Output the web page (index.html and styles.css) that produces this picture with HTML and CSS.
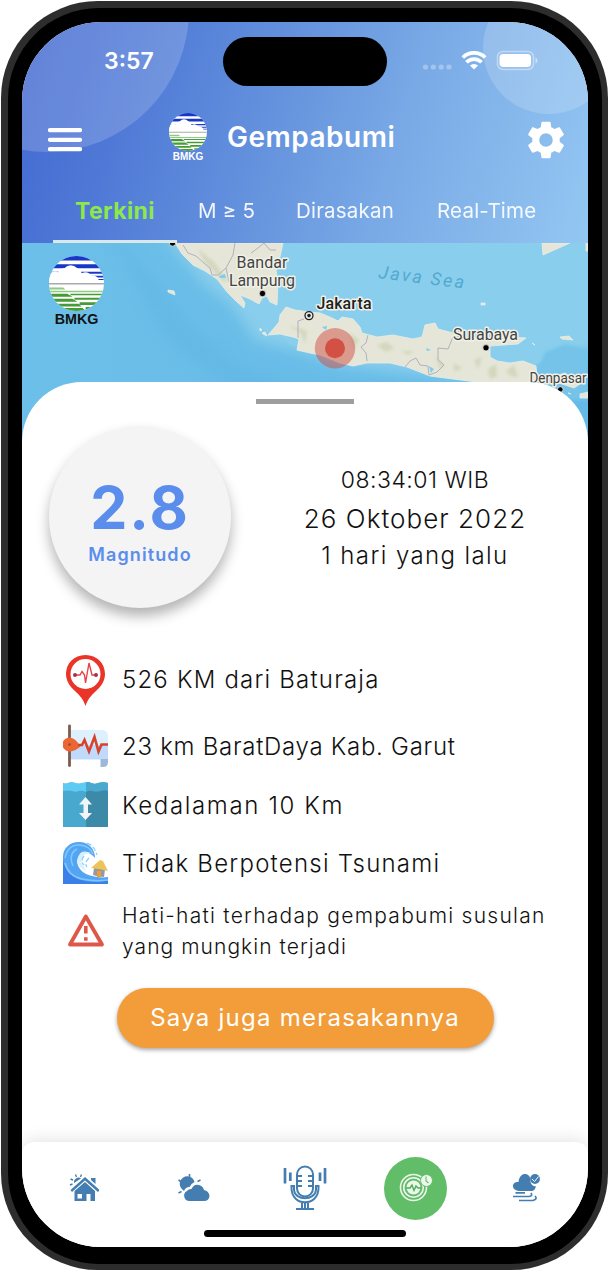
FILE: index.html
```html
<!DOCTYPE html>
<html lang="id">
<head>
<meta charset="utf-8">
<title>Gempabumi</title>
<link rel="stylesheet" href="styles.css">
</head>
<body>
<svg width="0" height="0" class="defs">
  <defs>
    <clipPath id="disc"><circle cx="27" cy="27" r="27"/></clipPath>
    <symbol id="logo" viewBox="0 0 54 54">
      <g clip-path="url(#disc)">
        <rect width="54" height="54" fill="#fff"/>
        <path d="M0 0H54V4.500H0ZM0 8H54V12H0ZM0 15.500H54V17.500H0ZM34 19.500H54V21H34ZM44 22.500H54V23.500H44Z" fill="#1737c6"/>
        <path d="M0 27V18Q3 14 9 16Q11 12 15 12Q21 6 28 12Q32 14 32 17Q38 14 41 19Q48 19 49 24H54V27Z" fill="#fff"/>
        <path d="M0 26.500H54V28H0Z" fill="#aaa"/>
        <path d="M0 31H14L16 33H0Z" fill="#8fca83"/>
        <path d="M0 34H54V35.500H0Z" fill="#8fca83"/>
        <path d="M0 37H18L23 40H0ZM21 37H54V38.500H21ZM0 42H23L28 45H0ZM25 41H54V43H25ZM0 47H29L32 49.500H0ZM30 45.500H54V48H30ZM0 51H33L36 54H0ZM36 50H54V54H36Z" fill="#459b35"/>
      </g>
    </symbol>
  </defs>
</svg>
<div class="phone">
 <div class="bezel">
  <div class="screen">
    <header class="header">
      <div class="bubble bubble-left"></div>
      <div class="bubble bubble-right"></div>
      <div class="status">
        <span class="time">3:57</span>
        <span class="island"></span>
        <svg class="signals" width="120" height="24" viewBox="420 48 120 24">
          <g fill="#fff" opacity=".3"><circle cx="426.500" cy="67" r="2.600"/><circle cx="434.300" cy="67" r="2.600"/><circle cx="442.200" cy="67" r="2.600"/><circle cx="450" cy="67" r="2.600"/></g>
          <g fill="none" stroke="#fff" stroke-width="3.700"><path d="M463.800 57.500A16 16 0 0 1 486.200 57.500"/><path d="M467.400 62.300A10.500 10.500 0 0 1 482.600 62.300"/></g>
          <path d="M470.900 65.500A6.200 6.200 0 0 1 479.100 65.500L475 69.500Z" fill="#fff"/>
          <rect x="498.500" y="51.500" width="36" height="18" rx="5.500" fill="none" stroke="#fff" stroke-opacity=".4" stroke-width="1.500"/>
          <rect x="500.500" y="54" width="31.500" height="13" rx="3.800" fill="#fff"/>
          <path d="M536.500 57.500Q538.500 58.500 538.500 60.500T536.500 63.500Z" fill="#fff" opacity=".5"/>
        </svg>
      </div>
      <div class="titlebar">
        <svg class="menu" width="34" height="24" viewBox="0 0 34 24"><path d="M2 2.200H32M2 11.800H32M2 21.200H32" stroke="#fff" stroke-width="4.300" stroke-linecap="round"/></svg>
        <div class="brand"><svg width="38" height="38"><use href="#logo"/></svg><span>BMKG</span></div>
        <h1>Gempabumi</h1>
        <svg class="gear" width="44" height="44" viewBox="0 0 24 24"><path fill="#fff" d="M19.430 12.980c.04-.32.07-.64.07-.98s-.03-.66-.07-.98l2.110-1.650c.19-.15.24-.42.12-.64l-2-3.460c-.12-.22-.39-.3-.61-.22l-2.490 1c-.52-.4-1.080-.73-1.690-.98l-.38-2.650C14.460 2.180 14.250 2 14 2h-4c-.25 0-.46.18-.49.42l-.38 2.650c-.61.25-1.170.59-1.690.98l-2.490-1c-.23-.09-.49 0-.61.22l-2 3.460c-.13.22-.07.49.12.64l2.110 1.650c-.04.32-.07.65-.07.98s.03.66.07.98l-2.110 1.650c-.19.15-.24.42-.12.64l2 3.460c.12.22.39.3.61.22l2.490-1c.52.4 1.080.73 1.690.98l.38 2.650c.03.24.24.42.49.42h4c.25 0 .46-.18.49-.42l.38-2.650c.61-.25 1.170-.59 1.690-.98l2.490 1c.23.09.49 0 .61-.22l2-3.460c.12-.22.07-.49-.12-.64l-2.110-1.650zM12 15.700a3.700 3.700 0 1 1 0-7.400 3.700 3.700 0 0 1 0 7.400z"/></svg>
      </div>
      <nav class="tabs">
        <span class="tab active">Terkini</span>
        <span class="tab">M ≥ 5</span>
        <span class="tab">Dirasakan</span>
        <span class="tab">Real-Time</span>
      </nav>
    </header>

    <section class="map">
      <svg width="566" height="200" viewBox="22 243 566 200">
        <defs>
          <filter id="soft" x="-20%" y="-20%" width="140%" height="140%"><feGaussianBlur stdDeviation="7"/></filter>
          <filter id="hill" x="-50%" y="-50%" width="200%" height="200%"><feGaussianBlur stdDeviation="1.800"/></filter>
          <linearGradient id="sea" x1="0" y1="0" x2="1" y2="0"><stop offset="0" stop-color="#6bbfe8"/><stop offset="1" stop-color="#66bae7"/></linearGradient>
        </defs>
        <rect x="22" y="243" width="566" height="200" fill="url(#sea)"/>
        <path d="M110 235L150 275L190 325L235 365L310 388L460 400H320L230 390L165 335Z" fill="#5eb3e2" opacity=".45" filter="url(#soft)"/>
        <path d="M165 238L205 285L232 305L255 340L300 352L345 366L430 376L520 388L538 365L600 350V230Z" fill="#89ceec" filter="url(#soft)"/>
        <path d="M260 243H588V340L550 356L520 375L400 365L290 345L268 320Z" fill="#89ceec"/>
        <path d="M537 375L545 352L566 344L588 350V400H560Z" fill="#74c3e9" filter="url(#hill)"/>
        <g fill="#e5e6d7" stroke="#e9eee6" stroke-width=".8">
          <path d="M175 243L182 254L193 265L205 271L217 279L227 292L237 302L244 308L245 303L240 295L250 299L259 304L262 298L267 296L270 302L277 305L278 283L276 270L280 257L283 243Z"/>
          <path d="M286 307L295 310L310 312L320 313L332 318L338 321L342 317L353 319L360 327L362 333L377 337L393 335L413 339L422 337L425 325L435 323L438 329L453 333L457 338L483 338L510 337L526 338L518 344L490 346L490 357L497 361L510 363L523 361L536 366L537 377L533 384H485L477 382L453 379L430 376L407 367L390 363L367 363L353 366L340 363L320 355L310 353L297 350L299 339L293 337L280 334L268 335L275 327L279 322L280 315Z"/>
          <path d="M542 243H570L543 255ZM586 243H588V251H586ZM168 290L174 291L175 295L168 292ZM481 303H485V305H481ZM560 337L569 336L573 340L562 339ZM532 343L535 345ZM552 377L565 373L580 384L574 388L556 382ZM568 393L571 394ZM580 394L588 392V398H580Z"/>
          <path d="M260 328L262 330L260 331ZM262 333L265 332L267 336L263 334Z"/>
        </g>
        <g fill="#cbd1b4" opacity=".7" filter="url(#hill)">
          <path d="M198 249L214 262L228 282L223 281L204 261ZM234 277L246 290L241 288ZM288 325L307 331L305 345L301 333ZM377 345L386 352L394 348L387 342ZM401 351H414L408 355ZM435 356L444 365L440 369ZM453 363L462 368L455 372ZM474 360L482 357L478 369ZM488 369L496 364L497 376L490 379ZM506 371L514 365L518 377L511 376ZM350 333L359 340L354 349Z"/>
        </g>
        <g fill="none" stroke="#b4b0bd" stroke-width="1"><path d="M183 245L188 253L196 256L204 263L210 268L212 275H218L226 268M235 243L233 255L226 268L229 282M251 253L258 248L264 243L270 250L276 250M368 335L366 343L361 347L366 353L367 361M405 367L410 361L416 358L420 365L428 366L429 375L437 372L444 365L438 360L438 348L448 349L453 337M304 319L298 321L298 338"/></g>
        <g fill="#7fcdf0"><path d="M219 276L225 274L226 278H220ZM426 348L431 350L427 351ZM429 366L434 369L431 373ZM322 327L327 326L326 330Z"/></g>
        <g class="place">
          <text x="236.500" y="267.500" textLength="51">Bandar</text>
          <text x="229" y="286" textLength="66">Lampung</text>
          <text x="453" y="340" textLength="65">Surabaya</text>
          <text x="529.500" y="383" textLength="57" lengthAdjust="spacingAndGlyphs" class="small">Denpasar</text>
          <text x="316.500" y="309" textLength="55" class="capital">Jakarta</text>
        </g>
        <g stroke="#f3f3ea" stroke-width=".8"><circle cx="262.500" cy="293.500" r="3.200"/><circle cx="172.500" cy="243" r="3.200"/><circle cx="486" cy="347.800" r="3.200"/><circle cx="560.300" cy="389.500" r="2.800"/></g>
        <circle cx="309" cy="315.600" r="4" fill="#eee" stroke="#222" stroke-width="1.300"/><circle cx="309" cy="315.600" r="1.800" fill="#222"/>
        <text class="sea" transform="translate(378 278) rotate(7)" textLength="86">Java Sea</text>
        <circle cx="335" cy="348.300" r="20.200" fill="#cf4d44" opacity=".5"/>
        <circle cx="335" cy="348.300" r="10" fill="#d25044"/>
      </svg>
      <div class="map-logo"><svg width="55" height="55"><use href="#logo"/></svg><span>BMKG</span></div>
    </section>

    <main class="sheet">
      <div class="handle"></div>
      <section class="summary">
        <div class="magnitude"><strong>2.8</strong><span>Magnitudo</span></div>
        <div class="when">
          <div class="clock">08:34:01 WIB</div>
          <div class="date">26 Oktober 2022</div>
          <div class="ago">1 hari yang lalu</div>
        </div>
      </section>
      <ul class="facts">
        <li>
          <svg width="46" height="52" viewBox="63 653 46 52"><path d="M85.500 654C74 654 66 662.500 66 673C66 680 70 685.500 75 690C80 694.500 83 698 85.500 705C88 698 91 694.500 96 690C101 685.500 105 680 105 673C105 662.500 97 654 85.500 654Z" fill="#e93427"/><circle cx="85.500" cy="673" r="15" fill="#fff"/><path d="M75 674H80L82 670.500L84.500 674L85.500 682L89 662L92 674H96" fill="none" stroke="#e74345" stroke-width="1.400"/><path d="M73 674A2 2 0 1 1 77 674A2 2 0 1 1 73 674M94 674A2 2 0 1 1 98 674A2 2 0 1 1 94 674" fill="#a92f52"/></svg>
          <span class="distance">526 KM dari Baturaja</span>
        </li>
        <li>
          <svg width="46" height="44" viewBox="63 724 46 44"><path d="M70 730H102Q108 730 108 737V760H70Z" fill="#def0fd"/><path d="M70 745H108V759H70Z" fill="#c1d9fa"/><path d="M100.500 759H108V762Q108 767 103 767H100.500Z" fill="#9fb8d9"/><path d="M69.500 726V765.500" stroke="#7b5b4b" stroke-width="2.800" stroke-linecap="round"/><path d="M70 737.500Q75 738 79 744.500L82 745Q75 752 69 751.500A6.500 6.500 0 1 1 70 737.500Z" fill="#ec6634"/><path d="M78 745H82L84.500 740L89 751.500L94.500 737L98.500 751.500L101.500 744.500H108" fill="none" stroke="#d5432b" stroke-width="2.600"/><circle cx="69.500" cy="744.500" r="1.200" fill="#8a4936"/></svg>
          <span class="region">23 km BaratDaya Kab. Garut</span>
        </li>
        <li>
          <svg width="46" height="46" viewBox="63 782 46 46"><path d="M63 783Q66 784 68 783Q72 781.500 75 783Q79 784 82 783H86V827H63Z" fill="#49a8ce"/><path d="M86 782Q89 781.500 91 783Q95 784.500 98 783Q103 781.500 108 783V827H86Z" fill="#3c89a8"/><path d="M63 783Q66 785 69 783Q72 781.500 75 783Q79 785 82 783L86 782V792Q82 790 79 791Q76 792.500 72 791Q68 790 63 791Z" fill="#5dcbf3"/><path d="M86 782Q89 781.500 91 783Q95 785 98 783Q103 781.500 108 783V791Q104 789.500 101 791Q96 792.500 92 791Q89 790 86 792Z" fill="#4aa9ce"/><path d="M85.500 797L92 804.500H88V813H92L85.500 820L79 813H83.500V804.500H79Z" fill="#f2f5f6"/></svg>
          <span class="depth">Kedalaman 10 Km</span>
        </li>
        <li>
          <svg width="46" height="46" viewBox="63 840 46 46"><path d="M63 884V857C63 848 70 842 79 842C89 842 95 849 95 858C91 853 86 851 81 854C74 859 77 869 86 874C93 877 102 878 108 877V884Z" fill="#53a5f4"/><path d="M63 884V860Q66 875 81 880Q94 884 108 880V884Z" fill="#3b7fe9"/><path d="M65 858Q68 844 80 845Q90 846 93 854M65 863Q68 876 82 879Q96 882 108 880M77 849Q68 854 73 866" fill="none" stroke="#80c8fc" stroke-width="1.500"/><path d="M91 853Q79 848 78 859Q77 867 86 871L84 867Q80 863 82 858Q84 853 91 853Z" fill="#d5f1ff"/><path d="M87 843Q94 845 97 855M84 856Q80 861 84 865M89 858Q84 863 87 867" fill="none" stroke="#8bcfff" stroke-width="1.300" stroke-dasharray="5 2"/><path d="M94 868L105 869L104 877Q98 877 93 875Z" fill="#9599a6"/><path d="M97 871H101V877H97Z" fill="#f49b2c"/><path d="M91 868L100 860L103 861L108 871L99 869Z" fill="#edc35a"/></svg>
          <span class="tsunami">Tidak Berpotensi Tsunami</span>
        </li>
        <li>
          <svg width="46" height="40" viewBox="63 911 46 40"><path d="M85.800 916.500L102 944.500H70Z" fill="none" stroke="#df5748" stroke-width="3.800" stroke-linejoin="round"/><path d="M85.800 926V933.500M85.800 937.200V940.700" stroke="#df5748" stroke-width="3.600"/></svg>
          <span class="note">Hati-hati terhadap gempabumi susulan<br><span class="note-end">yang mungkin terjadi</span></span>
        </li>
      </ul>
      <button class="felt">Saya juga merasakannya</button>
    </main>

    <nav class="bottom">
      <div class="items">
        <svg width="30" height="30" viewBox="68 1174 30 30" fill="#447eb0"><path d="M69.500 1191L84 1178L98.500 1191L97 1193L84 1181.500L71 1193Z"/><path d="M73.500 1192L84 1183L94 1192V1202H73.500ZM90 1179H94.500V1185L90 1181Z"/><path d="M76.500 1195H81V1199.500H76.500ZM85.500 1195H89.500V1202H85.500Z" fill="#fff"/><path d="M73 1184A4.500 4.500 0 0 1 80 1179.500Z"/><path d="M69.500 1180L72 1181M74.500 1175.500L75.500 1178M80.500 1175.500L79.500 1178M69 1186L71.500 1185" stroke="#447eb0" stroke-width="1.400"/></svg>
        <svg width="34" height="30" viewBox="178 1174 34 30" fill="#447eb0"><path d="M190.500 1202A5.300 5.300 0 0 1 188 1192Q189 1190 192.500 1190Q195 1184.500 200 1186Q204 1187 205 1191Q210 1192 210.500 1197Q210 1202 205 1202Z"/><path d="M184 1191A7.500 7.500 0 1 1 195.500 1183Q191.500 1185 190.500 1188Q186.500 1188 185 1192Z"/><path d="M190.500 1175V1178.500M179.500 1181L182.500 1183M179.500 1194L182.500 1192.500M198.500 1182.500L201.500 1181" stroke="#447eb0" stroke-width="1.600"/></svg>
        <svg width="44" height="46" viewBox="283 1166 44 46" fill="none" stroke="#447eb0" stroke-width="2"><rect x="297" y="1167.500" width="16" height="30" rx="8"/><path d="M297 1177H302M297 1182H302M297 1187H302M308 1177H313M308 1182H313M308 1187H313M294 1187H291.500V1189C291.500 1208 318.500 1208 318.500 1189V1187H316V1191C315 1202 295 1202 294 1191ZM302 1203V1209M305 1203V1209M308 1203V1209M296 1210H314"/><path d="M285 1169V1184.500M290.300 1173.500V1182M320 1173.500V1182M325 1169V1184.500" stroke-width="2.700"/></svg>
        <span class="current"><svg width="34" height="30" viewBox="399 1174 34 30" fill="none" stroke="#edf8ec" stroke-width="1.600"><circle cx="413.500" cy="1188.500" r="13"/><circle cx="413.500" cy="1188.500" r="9.800"/><circle cx="413.500" cy="1188.500" r="7" fill="#edf8ec" stroke="none"/><path d="M406 1189H410L412 1186L414 1191.500L416 1187L418 1189H421" stroke="#4dae56" stroke-width="1.400"/><circle cx="426.500" cy="1181.500" r="6" fill="#edf8ec" stroke="#62bd68" stroke-width="1"/><path d="M426 1177.500V1182L428.500 1184" stroke="#62bd68" stroke-width="1.100"/></svg></span>
        <svg width="30" height="30" viewBox="511 1174 30 30" fill="#447eb0"><path d="M519 1192C510 1191 512 1182 518.500 1183C519.500 1173 529 1173 530.500 1180C529.500 1186 535 1188 536 1187Q535 1192 531.500 1192Z"/><circle cx="535" cy="1180" r="4.900"/><path d="M532 1180L534.500 1182.500L538.500 1177.500" fill="none" stroke="#fff" stroke-width="1"/><path d="M515.500 1193.900H525M513 1197.500H529Q533 1197 531 1194M519 1201.500H533Q538 1200 535 1197" fill="none" stroke="#447eb0" stroke-width="1.700"/></svg>
      </div>
      <div class="home-indicator"></div>
    </nav>
  </div>
 </div>
</div>
</body>
</html>
```
FILE: styles.css
```css
* { box-sizing: border-box; }
body { margin: 0; background: #fff; font-family: Inter, "Liberation Sans", sans-serif; overflow: hidden; }
.defs { position: absolute; }
.phone { width: 607px; height: 1269px; margin: 1px 0 0 1px; padding: 6.500px; background: #2d2d2d; border-radius: 97px; }
.bezel { height: 100%; padding: 14.500px; background: #000; border-radius: 91px; }
.screen { position: relative; display: flex; flex-direction: column; width: 566px; height: 1225px; background: #fff; border-radius: 79px; overflow: hidden; }

.header { position: relative; flex: none; height: 221px; overflow: hidden; color: #fff; background: linear-gradient(107deg, #4369d1 0%, #4e77d6 18%, #6492dd 44%, #7aaae6 66%, #93c7f2 100%); }
.bubble { position: absolute; border-radius: 50%; background: rgba(255,255,255,.17); }
.bubble-left { left: -117px; top: -154px; width: 284px; height: 284px; }
.bubble-right { left: 461px; top: -40px; width: 132px; height: 132px; }
.status { position: relative; display: flex; height: 78px; padding: 15px 49px 0 0; }
.time { width: 201px; padding-left: 82px; font-size: 23px; font-weight: 600; line-height: 49px; }
.island { width: 165px; height: 49px; border-radius: 25px; background: #000; }
.signals { margin: 11px 0 0 32px; flex: none; }
.titlebar { position: relative; display: flex; height: 80px; padding-left: 26px; align-items: flex-start; }
.menu { margin-top: 28px; }
.brand { width: 40px; margin: 13px 0 0 86px; display: flex; flex-direction: column; align-items: center; font: 700 10px/11px "Liberation Sans", sans-serif; }
h1 { width: 280px; margin: 17px 0 0 19px; font-size: 28px; line-height: 40px; font-weight: 600; letter-spacing: .5px; }
.gear { margin: 18px 0 0 17px; flex: none; }
.tabs { position: relative; display: flex; height: 63px; padding-left: 31px; font-size: 20.500px; line-height: 62px; letter-spacing: .2px; }
.tab { flex: none; opacity: .92; }
.tab.active { width: 124px; padding-left: 22px; margin-right: 21px; color: #8de84b; font-size: 23px; font-weight: 700; letter-spacing: .4px; border-bottom: 3px solid #dbe8e9; opacity: 1; }
.tab:nth-child(2) { width: 98px; }
.tab:nth-child(3) { width: 141px; }

.map { position: relative; flex: none; height: 139px; }
.map > svg { display: block; }
.place text { font: 16px Roboto, sans-serif; fill: #444; paint-order: stroke; stroke: #f0f1e8; stroke-width: 3px; stroke-linejoin: round; }
.place .small { font-size: 14.500px; }
.place .capital { font-weight: 500; fill: #222; }
.sea { font: italic 18px Roboto, sans-serif; fill: #53a8d1; }
.map-logo { position: absolute; left: 27px; top: 13px; display: flex; flex-direction: column; align-items: center; color: #111; font: 700 14.300px/16px "Liberation Sans", sans-serif; }

.sheet { position: relative; flex: 1; padding-top: 17px; background: #fff; border-radius: 60px 60px 0 0; }
.handle { width: 98px; height: 5px; margin: 0 auto; background: #9e9e9e; }
.summary { display: flex; height: 242px; padding: 22px 0 0 27px; }
.magnitude { width: 182px; height: 182px; padding-top: 48px; border-radius: 50%; background: #f4f4f4; box-shadow: 0 8px 13px rgba(0,0,0,.3); color: #5b8dec; text-align: center; display: flex; flex-direction: column; }
.magnitude strong { font-size: 59px; line-height: 67px; letter-spacing: 2px; }
.magnitude span { font-size: 18px; line-height: 27px; font-weight: 600; letter-spacing: 1.100px; }
.when { width: 330px; margin-left: 19px; padding-top: 35px; text-align: center; font-weight: 300; color: #111; }
.clock { font-size: 23px; line-height: 39px; letter-spacing: .5px; }
.date { font-size: 26px; line-height: 37px; letter-spacing: 1.050px; }
.ago { font-size: 24px; line-height: 38px; letter-spacing: 1.400px; }
.facts { display: grid; grid-template-rows: 67px 66px 52px 64px 72px; margin: 0; padding: 0 0 0 41px; list-style: none; font-size: 24px; font-weight: 300; color: #111; }
.facts li { display: flex; align-items: center; gap: 13px; white-space: nowrap; }
.facts svg { flex: none; }
.distance { letter-spacing: 1.200px; }
.region { letter-spacing: .720px; }
.depth { letter-spacing: 1.650px; }
.tsunami { letter-spacing: 1.240px; }
.note { font-size: 21px; line-height: 31px; letter-spacing: 1.260px; }
.note-end { letter-spacing: 1.050px; }
.felt { display: block; width: 377px; height: 60px; margin: 21px auto 0; padding: 0; border: 0; border-radius: 30px; background: #f29d39; color: #fff; font: 400 24px/60px Inter, sans-serif; letter-spacing: 1.250px; box-shadow: 0 2px 4px rgba(0,0,0,.35); }
.bottom { position: relative; flex: none; height: 105px; background: #fff; border-radius: 12px 12px 0 0; box-shadow: 0 -3px 16px rgba(0,0,0,.1); }
.items { display: grid; grid-template-columns: 123px 97px 125px 97px 123px; height: 88px; padding-top: 4px; align-items: center; justify-items: center; }
.current { width: 63px; height: 63px; display: flex; align-items: center; justify-content: center; border-radius: 50%; background: #62bd68; }
.home-indicator { width: 202px; height: 7px; margin: 0 auto; border-radius: 4px; background: #000; }
```
